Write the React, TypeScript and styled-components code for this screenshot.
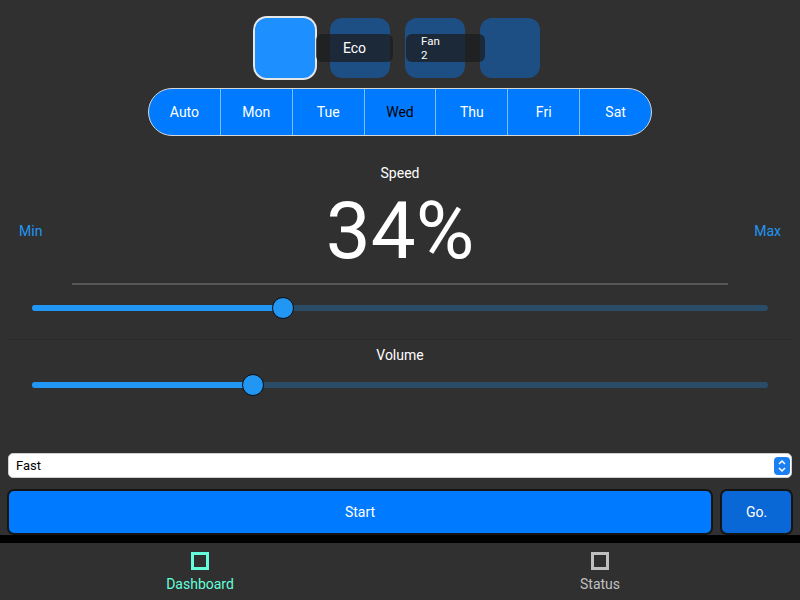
import React from "react";
import styled, { createGlobalStyle } from "styled-components";

const GlobalStyle = createGlobalStyle`
  html, body {
    margin: 0;
    padding: 0;
    background: #303030;
  }
  body {
    font-family: Roboto, "Liberation Sans", sans-serif;
    color: #fff;
  }
`;

const Screen = styled.div`
  height: 600px;
  display: flex;
  flex-direction: column;
  background: #303030;
  overflow: hidden;
`;

const Content = styled.div`
  flex: 1;
  display: flex;
  flex-direction: column;
  padding: 0 8px;
`;

const ModeRow = styled.div`
  display: flex;
  justify-content: center;
  gap: 15px;
  margin-top: 18px;
  padding-right: 5px;
`;

const ModeButton = styled.div<{ $active?: boolean }>`
  position: relative;
  width: 60px;
  height: 60px;
  border-radius: 12px;
  background: ${(p) => (p.$active ? "#1e8fff" : "#1d4f85")};
  box-shadow: ${(p) => (p.$active ? "0 0 0 2px #e6e6e6" : "none")};
`;

const ModeLabel = styled.span<{ $left: number; $width: number; $wrap?: boolean }>`
  position: absolute;
  top: 16px;
  left: ${(p) => p.$left}px;
  width: ${(p) => p.$width}px;
  height: 28px;
  box-sizing: border-box;
  padding: 0 15px;
  border-radius: 6px;
  background: rgba(26, 29, 32, 0.76);
  display: flex;
  flex-direction: column;
  align-items: ${(p) => (p.$wrap ? "flex-start" : "center")};
  justify-content: center;
  font-size: ${(p) => (p.$wrap ? "11.5px" : "14px")};
  line-height: 14px;
  color: #fff;
  z-index: 1;
`;

const Segmented = styled.div`
  align-self: center;
  display: flex;
  margin-top: 10px;
  width: 504px;
  height: 48px;
  box-sizing: border-box;
  border: 1px solid #d6d6d6;
  border-radius: 24px;
  background: #007aff;
  overflow: hidden;
`;

const Segment = styled.div<{ $active?: boolean }>`
  flex: 1;
  display: flex;
  align-items: center;
  justify-content: center;
  font-size: 14px;
  color: ${(p) => (p.$active ? "#000" : "#fff")};
  border-left: 1px solid #7dbbff;
  &:first-child {
    border-left: none;
  }
`;

const Title = styled.div`
  margin-top: 30px;
  text-align: center;
  font-size: 14px;
  line-height: 14px;
`;

const ValueRow = styled.div`
  margin-top: 11px;
  display: grid;
  grid-template-columns: 1fr 242px 1fr;
  align-items: center;
  padding: 0 11px;
`;

const StepButton = styled.div<{ $end?: boolean }>`
  justify-self: ${(p) => (p.$end ? "end" : "start")};
  color: #2196f3;
  font-size: 14px;
  line-height: 14px;
`;

const BigValue = styled.div`
  font-size: 80px;
  line-height: 80px;
  height: 80px;
  text-align: center;
  color: #fff;
`;

const Rule = styled.div`
  margin: 12px 64px 0;
  height: 2px;
  background: #565656;
`;

const SliderWrap = styled.div<{ $top: number }>`
  position: relative;
  margin: ${(p) => p.$top}px 24px 0;
  height: 22px;
  display: flex;
  align-items: center;
`;

const Track = styled.div`
  position: relative;
  width: 100%;
  height: 6px;
  border-radius: 3px;
  background: rgba(33, 150, 243, 0.28);
`;

const Fill = styled.div`
  height: 100%;
  border-radius: 3px;
  background: #2196f3;
`;

const Thumb = styled.div`
  position: absolute;
  top: 50%;
  width: 22px;
  height: 22px;
  box-sizing: border-box;
  border-radius: 50%;
  border: 1px solid #0b0b0b;
  background: #2196f3;
  transform: translate(-50%, -50%);
`;

const Divider = styled.div`
  margin-top: 20px;
  height: 1px;
  background: #2a2a2a;
`;

const SubTitle = styled.div`
  margin-top: 8px;
  text-align: center;
  font-size: 14px;
  line-height: 14px;
`;

const SelectWrap = styled.div`
  position: relative;
  margin-top: auto;
  height: 25px;
`;

const Select = styled.select`
  appearance: none;
  width: 100%;
  height: 25px;
  box-sizing: border-box;
  border: 1px solid #cfcfcf;
  border-radius: 5px;
  background: #fff;
  padding: 0 0 0 7px;
  font-family: Roboto, "Liberation Sans", sans-serif;
  font-size: 13px;
  color: #000;
  outline: none;
`;

const SelectArrow = styled.div`
  position: absolute;
  right: 2px;
  top: 4px;
  width: 16px;
  height: 18px;
  border-radius: 4px;
  background: #1a7ff2;
  display: flex;
  align-items: center;
  justify-content: center;
  pointer-events: none;
`;

const ButtonRow = styled.div`
  display: flex;
  gap: 7px;
  margin: 11px -1px 0;
  height: 46px;
`;

const ActionButton = styled.button<{ $primary?: boolean }>`
  ${(p) => (p.$primary ? "flex: 1;" : "width: 73px;")}
  height: 46px;
  box-sizing: border-box;
  border: 2px solid #141414;
  border-radius: 7px;
  background: ${(p) => (p.$primary ? "#007aff" : "#0a68d6")};
  color: #fff;
  font-family: Roboto, "Liberation Sans", sans-serif;
  font-size: 14px;
  padding: 0;
`;

const TabBar = styled.div`
  height: 57px;
  border-top: 8px solid #000;
  display: flex;
  background: #303030;
`;

const Tab = styled.div<{ $active?: boolean }>`
  flex: 1;
  display: flex;
  flex-direction: column;
  align-items: center;
  padding-top: 9px;
  gap: 7px;
  color: ${(p) => (p.$active ? "#64ffda" : "#c0c0c0")};
  font-size: 14px;
  line-height: 14px;
`;

const Slider: React.FC<{ value: number; top: number }> = ({ value, top }) => (
  <SliderWrap $top={top}>
    <Track>
      <Fill style={{ width: `${value * 100}%` }} />
      <Thumb style={{ left: `${value * 100}%` }} />
    </Track>
  </SliderWrap>
);

const TabIcon: React.FC = () => (
  <svg width="18" height="18" viewBox="0 0 18 18">
    <rect x="1.5" y="1.5" width="15" height="15" fill="none" stroke="currentColor" strokeWidth="3" />
  </svg>
);

const segments = ["Auto", "Mon", "Tue", "Wed", "Thu", "Fri", "Sat"];

export default function App() {
  return (
    <>
      <GlobalStyle />
      <Screen>
        <Content>
          <ModeRow>
            <ModeButton $active />
            <ModeButton>
              <ModeLabel $left={-14} $width={77}>
                Eco
              </ModeLabel>
            </ModeButton>
            <ModeButton>
              <ModeLabel $left={1} $width={79} $wrap>
                <span>Fan</span>
                <span>2</span>
              </ModeLabel>
            </ModeButton>
            <ModeButton />
          </ModeRow>

          <Segmented>
            {segments.map((s, i) => (
              <Segment key={s} $active={i === 3}>
                {s}
              </Segment>
            ))}
          </Segmented>

          <Title>Speed</Title>
          <ValueRow>
            <StepButton>Min</StepButton>
            <BigValue>34%</BigValue>
            <StepButton $end>Max</StepButton>
          </ValueRow>
          <Rule />
          <Slider value={0.341} top={12} />

          <Divider />
          <SubTitle>Volume</SubTitle>
          <Slider value={0.3} top={12} />

          <SelectWrap>
            <Select defaultValue="fast">
              <option value="fast">Fast</option>
              <option value="slow">Slow</option>
            </Select>
            <SelectArrow>
              <svg width="10" height="14" viewBox="0 0 10 14">
                <path d="M2 5 L5 2 L8 5 M2 9 L5 12 L8 9" fill="none" stroke="#fff" strokeWidth="1.5" />
              </svg>
            </SelectArrow>
          </SelectWrap>

          <ButtonRow>
            <ActionButton $primary>Start</ActionButton>
            <ActionButton>Go.</ActionButton>
          </ButtonRow>
        </Content>

        <TabBar>
          <Tab $active>
            <TabIcon />
            Dashboard
          </Tab>
          <Tab>
            <TabIcon />
            Status
          </Tab>
        </TabBar>
      </Screen>
    </>
  );
}
